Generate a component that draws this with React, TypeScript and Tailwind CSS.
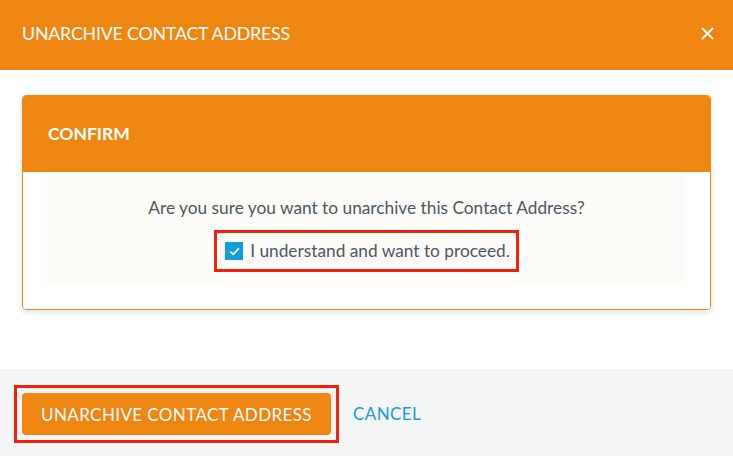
import React from 'react';

export default function App() {
  return (
    <div className="w-[733px] h-[456px] flex flex-col bg-white overflow-hidden" style={{ fontFamily: 'Lato, "Open Sans", sans-serif' }}>
      {/* Modal header */}
      <header className="h-[70px] shrink-0 bg-[#ef8612] flex items-center justify-between pl-[22px] pr-[19px] pb-[4px]">
        <h1 className="text-white text-[17.8px] tracking-[-0.2px]">UNARCHIVE CONTACT ADDRESS</h1>
        <svg width="13" height="13" viewBox="0 0 13 13" className="text-white">
          <path d="M1.5 1.5L11.5 11.5M11.5 1.5L1.5 11.5" stroke="currentColor" strokeWidth="1.8" strokeLinecap="round" />
        </svg>
      </header>

      {/* Body */}
      <div className="flex-1 px-[22px] pt-[25px]">
        <div className="border border-[#ef8612] rounded-[4px] overflow-hidden shadow-[0_2px_6px_rgba(0,0,0,0.12)]">
          <div className="h-[76px] bg-[#ef8612] flex items-center pl-[25px]">
            <h2 className="text-white font-bold text-[17.5px]">CONFIRM</h2>
          </div>
          <div className="bg-white px-[24px] pb-[25px]">
            <div className="bg-[#fdfcf9] flex flex-col items-center pt-[24px] pb-[12px]">
              <p className="text-[#4b5660] text-[17.3px] leading-[24px]">Are you sure you want to unarchive this Contact Address?</p>
              <div className="mt-[10px] border-[3px] border-[#f2200d] flex items-center gap-[7px] pl-[8px] pr-[6px] h-[42px]">
                <span className="w-[18px] h-[18px] bg-[#0f9edb] flex items-center justify-center">
                  <svg width="11" height="11" viewBox="0 0 11 11">
                    <path d="M1.5 5.8L4.2 8.4L9.5 2.6" stroke="white" strokeWidth="1.6" fill="none" strokeLinecap="round" strokeLinejoin="round" />
                  </svg>
                </span>
                <span className="text-[#4b5660] text-[17.3px]">I understand and want to proceed.</span>
              </div>
            </div>
          </div>
        </div>
      </div>

      {/* Footer */}
      <footer className="h-[87px] shrink-0 bg-[#f4f5f5] flex items-center pl-[14px] gap-[14px] pt-[2px]">
        <div className="border-[3px] border-[#f2200d] p-[5px]">
          <button className="h-[42px] w-[309px] rounded-[4px] bg-[#ef8612] text-white text-[17px] tracking-[0.4px] pt-[2px]">
            UNARCHIVE CONTACT ADDRESS
          </button>
        </div>
        <span className="text-[#1b9ad6] text-[17px] tracking-[0.4px]">CANCEL</span>
      </footer>
    </div>
  );
}
